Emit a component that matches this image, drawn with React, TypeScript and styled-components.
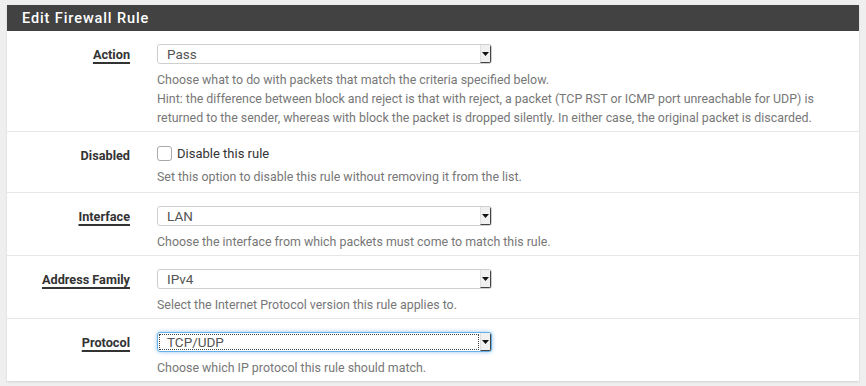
import React from 'react'
import styled, { createGlobalStyle } from 'styled-components'

interface RuleField {
  label: string
  required?: boolean
  value?: string
  focused?: boolean
  checkbox?: string
  help: string[]
}

const fields: RuleField[] = [
  {
    label: 'Action',
    required: true,
    value: 'Pass',
    help: [
      'Choose what to do with packets that match the criteria specified below.',
      'Hint: the difference between block and reject is that with reject, a packet (TCP RST or ICMP port unreachable for UDP) is',
      'returned to the sender, whereas with block the packet is dropped silently. In either case, the original packet is discarded.',
    ],
  },
  {
    label: 'Disabled',
    checkbox: 'Disable this rule',
    help: ['Set this option to disable this rule without removing it from the list.'],
  },
  {
    label: 'Interface',
    required: true,
    value: 'LAN',
    help: ['Choose the interface from which packets must come to match this rule.'],
  },
  {
    label: 'Address Family',
    required: true,
    value: 'IPv4',
    help: ['Select the Internet Protocol version this rule applies to.'],
  },
  {
    label: 'Protocol',
    required: true,
    value: 'TCP/UDP',
    focused: true,
    help: ['Choose which IP protocol this rule should match.'],
  },
]

const GlobalStyle = createGlobalStyle`
  body {
    margin: 0;
    background: #efefef;
    font-family: Roboto, "Liberation Sans", sans-serif;
  }
`

const App = () => {
  return (
    <Page>
      <GlobalStyle />
      <Panel>
        <PanelHeading>Edit Firewall Rule</PanelHeading>
        {fields.map((field) => (
          <FormRow key={field.label}>
            <FieldLabel>
              <LabelText $required={field.required}>{field.label}</LabelText>
            </FieldLabel>
            <FieldBody>
              {field.checkbox ? (
                <CheckLine>
                  <CheckBox />
                  {field.checkbox}
                </CheckLine>
              ) : (
                <SelectBox $focused={field.focused}>
                  <SelectValue $focused={field.focused}>{field.value}</SelectValue>
                  <SelectArrow>
                    <svg width='7' height='4' viewBox='0 0 7 4'>
                      <path d='M0 0h7L3.5 4z' fill='#111' />
                    </svg>
                  </SelectArrow>
                </SelectBox>
              )}
              <HelpText>
                {field.help.map((line) => (
                  <div key={line}>{line}</div>
                ))}
              </HelpText>
            </FieldBody>
          </FormRow>
        ))}
      </Panel>
    </Page>
  )
}

const Page = styled.div`
  padding: 5px 7px 6px 7px;
`

const Panel = styled.div`
  background: #fff;
  box-shadow: 0 1px 2px rgba(0, 0, 0, 0.12);
`

const PanelHeading = styled.div`
  height: 26px;
  display: flex;
  align-items: center;
  padding-left: 15px;
  background: #424242;
  color: #fff;
  font-size: 14.5px;
  font-weight: 500;
  letter-spacing: 0.9px;
`

const FormRow = styled.div`
  display: grid;
  grid-template-columns: 123px 1fr;
  column-gap: 27px;
  padding: 13px 0 4px 0;
  border-bottom: 1px solid #e6e6e6;

  &:last-child {
    border-bottom: none;
  }
  &:nth-child(3) {
    padding-bottom: 6px;
  }
`

const FieldLabel = styled.div`
  height: 20px;
  display: flex;
  align-items: center;
  justify-content: flex-end;
`

const LabelText = styled.span<{ $required?: boolean }>`
  font-size: 12.7px;
  font-weight: 700;
  color: #333;
  text-decoration: ${(p) => (p.$required ? 'underline' : 'none')};
  text-underline-offset: 3px;
  text-decoration-thickness: 1.5px;
`

const FieldBody = styled.div`
  display: flex;
  flex-direction: column;
  align-items: flex-start;
  gap: 6px;
`

const SelectBox = styled.div<{ $focused?: boolean }>`
  width: 335px;
  height: 20px;
  box-sizing: border-box;
  display: flex;
  border: 1px solid ${(p) => (p.$focused ? '#66afe9' : '#cfcfcf')};
  border-radius: 3px;
  box-shadow: ${(p) => (p.$focused ? '0 0 4px rgba(102, 175, 233, 0.7)' : 'none')};
  background: #fff;
  overflow: hidden;
`

const SelectValue = styled.div<{ $focused?: boolean }>`
  flex: 1;
  display: flex;
  align-items: center;
  padding-left: 9px;
  font-size: 13.5px;
  color: #555;
  outline: ${(p) => (p.$focused ? '1px dotted #444' : 'none')};
  outline-offset: -2px;
`

const SelectArrow = styled.div`
  width: 11px;
  display: flex;
  align-items: center;
  justify-content: center;
  background: #f0f0f0;
  border-left: 1px solid #e0e0e0;
  border-right: 1px solid #444;
  border-bottom: 1px solid #444;
  box-sizing: border-box;
`

const CheckLine = styled.label`
  height: 16px;
  display: flex;
  align-items: center;
  gap: 5px;
  font-size: 13px;
  color: #333;
`

const CheckBox = styled.span`
  width: 13px;
  height: 13px;
  border: 1px solid #aaa;
  border-radius: 3px;
  background: #fff;
`

const HelpText = styled.div`
  font-size: 12.4px;
  line-height: 19px;
  color: #777;
`

export default App
